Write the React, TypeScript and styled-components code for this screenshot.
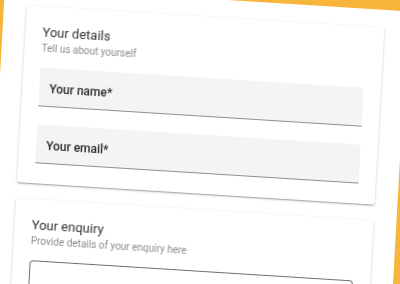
import styled, { createGlobalStyle } from 'styled-components'

const GlobalStyle = createGlobalStyle`
  html, body {
    margin: 0;
    padding: 0;
  }
  body {
    font-family: Roboto, 'Liberation Sans', sans-serif;
  }
`

const Page = styled.div`
  width: 400px;
  height: 284px;
  overflow: hidden;
  background: #f8b53c;
`

// the whole form sheet lies tilted on the orange backdrop
const Sheet = styled.div`
  box-sizing: border-box;
  width: 404px;
  min-height: 360px;
  margin: -14px 0 0 5px;
  padding: 18px 23px;
  background: #fff;
  transform-origin: 0 0;
  transform: rotate(3.6deg) skewX(0.4deg);
  filter: blur(0.3px);
  display: flex;
  flex-direction: column;
  gap: 16px;
`

const Card = styled.section`
  background: #fff;
  border-radius: 2px;
  padding: 17px 17px 20px;
  box-shadow: 0 1px 3px rgba(0, 0, 0, 0.2), 0 1px 1px rgba(0, 0, 0, 0.14),
    0 2px 1px -1px rgba(0, 0, 0, 0.12);
`

const Title = styled.h2`
  margin: 0;
  font-size: 13px;
  line-height: 17px;
  font-weight: 400;
  color: #333;
`

const Subtitle = styled.p`
  margin: 1px 0 0;
  font-size: 10px;
  line-height: 13px;
  color: #8c8c8c;
`

const Fields = styled.div`
  margin-top: 13px;
  display: flex;
  flex-direction: column;
  gap: 18px;
`

const Field = styled.div`
  box-sizing: border-box;
  height: 39px;
  padding: 10px 10px 0;
  background: #f4f4f4;
  border-radius: 4px 4px 0 0;
  border-bottom: 1px solid #8f8f8f;
`

const Label = styled.span`
  font-size: 12px;
  line-height: 14px;
  font-weight: 500;
  color: #2b2b2b;
`

const TextArea = styled.div<{ $rows: number }>`
  box-sizing: border-box;
  height: ${(p) => p.$rows * 20}px;
  border: 1px solid #6f6f6f;
  border-radius: 4px;
`

function Section({ title, subtitle, children }: { title: string; subtitle: string; children: React.ReactNode }) {
  return (
    <Card>
      <Title>{title}</Title>
      <Subtitle>{subtitle}</Subtitle>
      <Fields>{children}</Fields>
    </Card>
  )
}

export default function App() {
  return (
    <>
      <GlobalStyle />
      <Page>
        <Sheet>
          <Section title="Your details" subtitle="Tell us about yourself">
            <Field>
              <Label>Your name*</Label>
            </Field>
            <Field>
              <Label>Your email*</Label>
            </Field>
          </Section>
          <Section title="Your enquiry" subtitle="Provide details of your enquiry here">
            <TextArea $rows={5} />
          </Section>
        </Sheet>
      </Page>
    </>
  )
}
